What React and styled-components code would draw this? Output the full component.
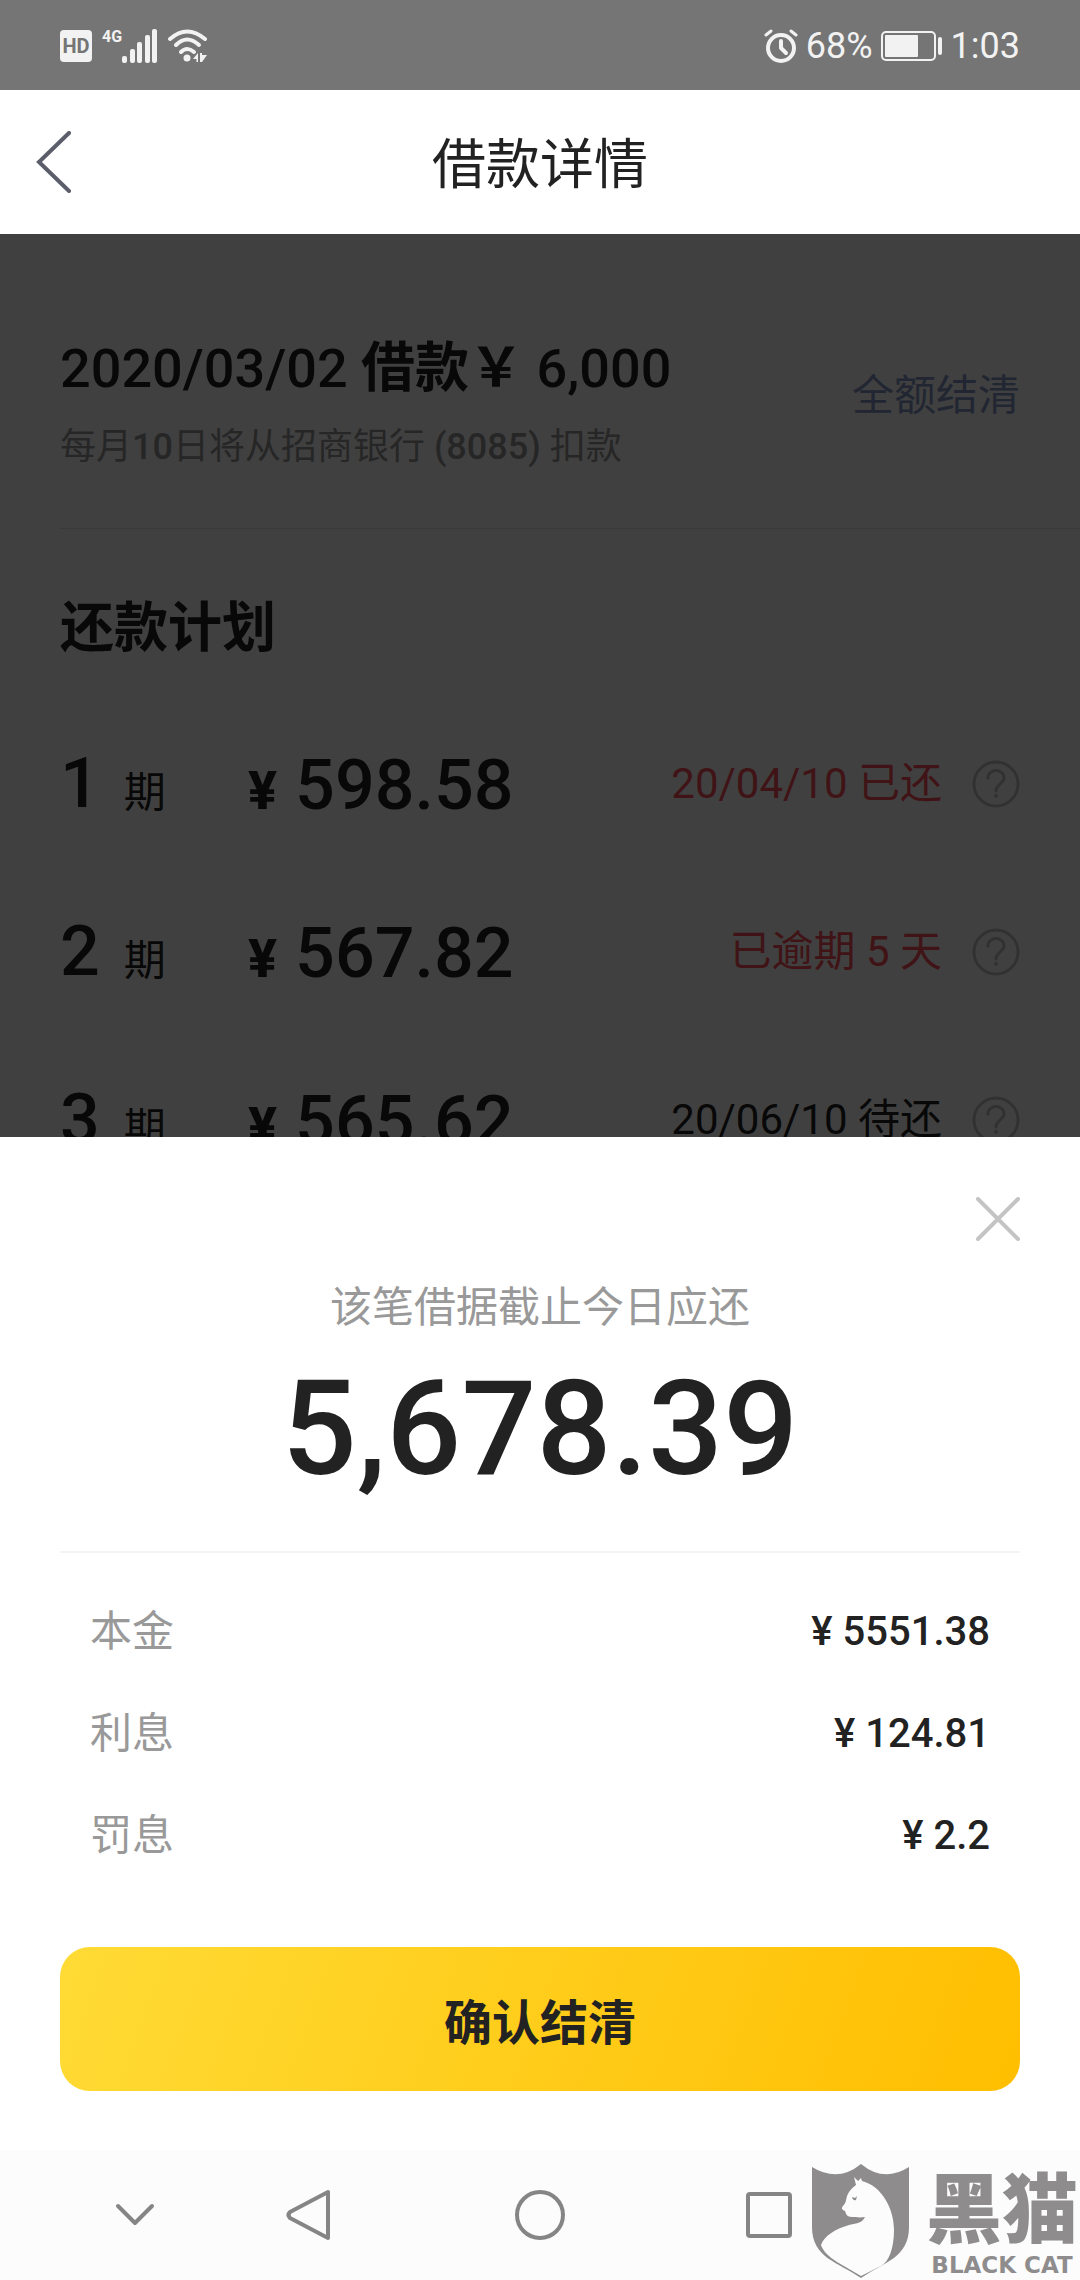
import React, { Fragment } from 'react';

//styles
import styled, { createGlobalStyle } from 'styled-components';

const COLORS = {
  TEXT: '#222222',
  MUTED: '#999999',
  LINK: '#8498c8',
  DANGER: '#ff5058',
  BORDER: '#f4f4f4',
  STATUS_BAR: '#757575',
  STATUS_ICON: '#f2f2f2',
  HELP_ICON: '#c4c4c4',
  NAV_ICON: '#858585',
  LOGO: '#8e8c8d'
};

const FONT_SIZE = {
  SMALL: '36px',
  BODY: '42px',
  BUTTON: '48px',
  TITLE: '54px',
  PLAN: '70px',
  TOTAL: '132px'
};

const GUTTER = '60px';

const GlobalStyle = createGlobalStyle`
  * {
    box-sizing: border-box;
  }
  body {
    margin: 0;
    background: #ffffff;
    color: ${COLORS.TEXT};
    font-family: Roboto, "Noto Sans CJK SC", sans-serif;
    font-size: ${FONT_SIZE.BODY};
  }
  h1, h2, p, ol, dl, dd {
    margin: 0;
    padding: 0;
  }
  button {
    border: 0;
    padding: 0;
    background: none;
    color: inherit;
    font: inherit;
  }
  svg {
    display: block;
  }
`;

const Screen = styled.div`
  position: relative;
  display: flex;
  flex-direction: column;
  height: 100vh;
  overflow: hidden;
`;

const StatusBar = styled.div`
  display: flex;
  flex: none;
  align-items: center;
  justify-content: space-between;
  height: 90px;
  padding: 2px ${GUTTER} 0;
  background: ${COLORS.STATUS_BAR};
  color: ${COLORS.STATUS_ICON};
  font-size: ${FONT_SIZE.SMALL};
`;

const StatusGroup = styled.div`
  display: flex;
  align-items: center;
  gap: ${(props) => props.$gap};
`;

const HdBadge = styled.span`
  width: 32px;
  height: 32px;
  border-radius: 4px;
  background: ${COLORS.STATUS_ICON};
  color: ${COLORS.STATUS_BAR};
  font-size: 20px;
  font-weight: 700;
  line-height: 32px;
  text-align: center;
`;

const Network = styled.div`
  display: flex;
  align-items: flex-start;
  font-size: 16px;
  font-weight: 700;
  line-height: 16px;
`;

const Header = styled.header`
  display: grid;
  flex: none;
  grid-template-columns: 1fr auto 1fr;
  align-items: center;
  height: 144px;
  padding: 0 34px;
  background: #ffffff;
`;

const BackButton = styled.button`
  justify-self: start;
`;

const HeaderTitle = styled.h1`
  padding-top: 8px;
  font-size: ${FONT_SIZE.TITLE};
  font-weight: 400;
  line-height: 72px;
`;

const Content = styled.main`
  position: relative;
  flex: 1 1 0;
  min-height: 0;
  overflow: hidden;
`;

const Mask = styled.div`
  position: absolute;
  inset: 0;
  background: rgba(0, 0, 0, 0.75);
`;

const Summary = styled.section`
  display: flex;
  align-items: center;
  justify-content: space-between;
  margin-left: ${GUTTER};
  padding: 93px ${GUTTER} 63px 0;
  border-bottom: 1px solid #e6e6e6;
`;

const SummaryTitle = styled.h2`
  font-size: ${FONT_SIZE.TITLE};
  font-weight: 500;
  line-height: 84px;
`;

const Strong = styled.span`
  font-weight: 700;
`;

const SummaryNote = styled.p`
  margin-top: 18px;
  color: ${COLORS.MUTED};
  font-size: ${FONT_SIZE.SMALL};
  line-height: 36px;
`;

const Digits = styled.span`
  font-weight: 500;
`;

const SettleLink = styled.a`
  color: ${COLORS.LINK};
  line-height: 60px;
  text-decoration: none;
`;

const PlanTitle = styled.h2`
  padding: 64px ${GUTTER} 35px;
  font-size: ${FONT_SIZE.TITLE};
  font-weight: 700;
  line-height: 72px;
`;

const PlanList = styled.ol`
  list-style: none;
`;

const PlanRow = styled.li`
  display: grid;
  grid-template-columns: 188px 1fr auto 48px;
  align-items: center;
  height: 168px;
  padding: 0 ${GUTTER};
`;

const Term = styled.div`
  display: flex;
  align-items: baseline;
  gap: 24px;
  padding-top: 8px;
  line-height: 84px;
`;

const TermNumber = styled.span`
  font-size: ${FONT_SIZE.PLAN};
  font-weight: 500;
`;

const PlanAmount = styled.div`
  display: flex;
  align-items: baseline;
  gap: 18px;
  padding-top: 8px;
  font-size: ${FONT_SIZE.PLAN};
  font-weight: 500;
  line-height: 84px;
`;

const PlanCurrency = styled.span`
  font-size: ${FONT_SIZE.TITLE};
  font-weight: 800;
`;

const PlanStatus = styled.div`
  margin-right: 30px;
  color: ${(props) => (props.$danger ? COLORS.DANGER : COLORS.TEXT)};
  line-height: 60px;
`;

const Sheet = styled.section`
  display: flex;
  flex: none;
  flex-direction: column;
  padding: 60px ${GUTTER} 59px;
  background: #ffffff;
`;

const CloseButton = styled.button`
  align-self: flex-end;
`;

const SheetLabel = styled.p`
  margin-top: 37px;
  color: ${COLORS.MUTED};
  line-height: 60px;
  text-align: center;
`;

const SheetTotal = styled.p`
  margin-top: 19px;
  padding-bottom: 50px;
  border-bottom: 2px solid ${COLORS.BORDER};
  font-size: ${FONT_SIZE.TOTAL};
  font-weight: 500;
  line-height: 144px;
  text-align: center;
`;

const Breakdown = styled.dl`
  padding: 28px 30px 60px;
`;

const BreakdownRow = styled.div`
  display: flex;
  justify-content: space-between;
  line-height: 102px;
`;

const BreakdownLabel = styled.dt`
  color: ${COLORS.MUTED};
`;

const BreakdownValue = styled.dd`
  font-size: 40px;
  font-weight: 500;
`;

const ConfirmButton = styled.button`
  height: 144px;
  border-radius: 30px;
  background: linear-gradient(110deg, #ffdb35, #ffbe00);
  font-size: ${FONT_SIZE.BUTTON};
  font-weight: 700;
`;

const NavBar = styled.nav`
  display: grid;
  flex: none;
  grid-template-columns: 169fr 180fr 282fr 176fr;
  align-items: center;
  justify-items: center;
  height: 130px;
  padding: 0 223px 0 50px;
  background: #fcfcfc;
`;

const Watermark = styled.div`
  position: absolute;
  right: 2px;
  bottom: 0;
  display: flex;
  align-items: flex-end;
  gap: 16px;
  color: ${COLORS.LOGO};
`;

const LogoText = styled.div`
  display: flex;
  flex-direction: column;
  align-items: center;
`;

const LogoName = styled.span`
  font-size: 76px;
  font-weight: 900;
  line-height: 78px;
`;

const LogoLatin = styled.span`
  font-family: "DejaVu Sans", sans-serif;
  font-size: 23px;
  font-weight: 700;
  line-height: 30px;
`;

const SignalIcon = () => (
  <svg width="36" height="34" viewBox="0 0 36 34" fill="currentColor" aria-hidden="true">
    <rect x="0" y="27" width="5" height="7" rx="2" />
    <rect x="8" y="20" width="5" height="14" rx="2" />
    <rect x="15" y="13" width="5" height="21" rx="2" />
    <rect x="23" y="6" width="5" height="28" rx="2" />
    <rect x="30" y="0" width="5" height="34" rx="2" />
  </svg>
);

const WifiIcon = () => (
  <svg width="40" height="34" viewBox="0 0 40 34" fill="none" stroke="currentColor" strokeWidth="4" strokeLinecap="round" aria-hidden="true">
    <path d="M2 10 Q19 -5 37 10" />
    <path d="M8 16 Q19 5 31 16" />
    <path d="M13 23 Q19 17 26 23" />
    <circle cx="19" cy="29" r="3.500" fill="currentColor" stroke="none" />
    <path d="M25 30 L30 24 V33 H28.500 V30 Z M32 24 H34 V26 H39 L34 33 H32 Z" fill="currentColor" stroke="none" />
  </svg>
);

const AlarmIcon = () => (
  <svg width="34" height="34" viewBox="0 0 34 34" fill="none" stroke="currentColor" strokeWidth="4" strokeLinecap="round" aria-hidden="true">
    <circle cx="17" cy="19" r="13" />
    <path d="M17 12 V19 L22 24" strokeLinejoin="round" />
    <path d="M2 6 L7 2 M27 2 L32 6" strokeWidth="3" />
  </svg>
);

const BatteryIcon = () => (
  <svg width="62" height="30" viewBox="0 0 62 30" aria-hidden="true">
    <rect x="1" y="1" width="53" height="28" rx="4" fill="none" stroke="currentColor" strokeWidth="2" />
    <rect x="4" y="4" width="33" height="22" rx="1" fill="currentColor" />
    <rect x="57" y="6" width="4" height="18" rx="2" fill="currentColor" />
  </svg>
);

const BackIcon = () => (
  <svg width="40" height="62" viewBox="0 0 40 62" fill="none" stroke="#5b5e6a" strokeWidth="4" strokeLinecap="round" aria-hidden="true">
    <path d="M35 2 L5 31 L35 60" />
  </svg>
);

const HelpIcon = () => (
  <svg width="48" height="48" viewBox="0 0 48 48" fill="none" stroke={COLORS.HELP_ICON} strokeWidth="3" aria-hidden="true">
    <circle cx="24" cy="24" r="22" />
    <path d="M16 18 C16 8 32 8 32 18 C32 24 24 24 24 31" strokeLinecap="round" />
    <circle cx="24" cy="36" r="2" fill={COLORS.HELP_ICON} stroke="none" />
  </svg>
);

const CloseIcon = () => (
  <svg width="44" height="44" viewBox="0 0 44 44" fill="none" stroke="#c4c4c4" strokeWidth="4" strokeLinecap="round" aria-hidden="true">
    <path d="M2 2 L42 42 M42 2 L2 42" />
  </svg>
);

const NavIcon = ({ children }) => (
  <svg width="54" height="54" viewBox="0 0 54 54" fill="none" stroke={COLORS.NAV_ICON} strokeWidth="4" strokeLinecap="round" strokeLinejoin="round" aria-hidden="true">
    {children}
  </svg>
);

const ShieldCat = () => (
  <svg width="98" height="116" viewBox="0 0 98 116" aria-hidden="true">
    <path
      d="M0 3 Q26 19 49 0 Q72 19 97 3 V63 C97 94 72 98 49 114 C26 98 0 94 0 63 Z"
      fill="currentColor"
    />
    <path
      d="M44 21 L42 13 L46 17 L49 14 L50 17 C70 22 82 45 82 66 C82 84 77 98 69 102 L49 112 L25 98 C16 92 11 87 9 81 C12 72 23 65 37 61 C46 59 50 59 53 53 C47 54 44 53 40 53 C35 53 34 50 33 47 C30 46 29 44 31 42 C34 39 34 36 35 32 C37 27 40 24 44 21 Z"
      fill="#fcfcfc"
    />
    <path d="M40 33 Q41 37 44 36 L45 32 L43 34 Z" fill="currentColor" />
  </svg>
);

const plans = [
  { term: 1, amount: '598.58', status: '20/04/10 已还', danger: true },
  { term: 2, amount: '567.82', status: '已逾期 5 天', danger: true },
  { term: 3, amount: '565.62', status: '20/06/10 待还', danger: false }
];

const breakdown = [
  { label: '本金', value: '5551.38' },
  { label: '利息', value: '124.81' },
  { label: '罚息', value: '2.2' }
];

const App = () => {
  return (
    <Fragment>
      <GlobalStyle />
      <Screen>
        <StatusBar>
          <StatusGroup $gap="10px">
            <HdBadge>HD</HdBadge>
            <Network>
              4G
              <SignalIcon />
            </Network>
            <WifiIcon />
          </StatusGroup>
          <StatusGroup $gap="8px">
            <AlarmIcon />
            <span>68%</span>
            <BatteryIcon />
            <span>1:03</span>
          </StatusGroup>
        </StatusBar>

        <Header>
          <BackButton type="button" aria-label="返回"><BackIcon /></BackButton>
          <HeaderTitle>借款详情</HeaderTitle>
        </Header>

        <Content>
          <Summary>
            <div>
              <SummaryTitle>2020/03/02 <Strong>借款￥</Strong> 6,000</SummaryTitle>
              <SummaryNote>
                每月<Digits>10</Digits>日将从招商银行 <Digits>(8085)</Digits> 扣款
              </SummaryNote>
            </div>
            <SettleLink href="#settle">全额结清</SettleLink>
          </Summary>
          <PlanTitle>还款计划</PlanTitle>
          <PlanList>
            {plans.map((plan) => (
              <PlanRow key={plan.term}>
                <Term><TermNumber>{plan.term}</TermNumber>期</Term>
                <PlanAmount><PlanCurrency>¥</PlanCurrency>{plan.amount}</PlanAmount>
                <PlanStatus $danger={plan.danger}>{plan.status}</PlanStatus>
                <button type="button" aria-label="说明"><HelpIcon /></button>
              </PlanRow>
            ))}
          </PlanList>
          <Mask />
        </Content>

        <Sheet id="settle">
          <CloseButton type="button" aria-label="关闭"><CloseIcon /></CloseButton>
          <SheetLabel>该笔借据截止今日应还</SheetLabel>
          <SheetTotal>5,678.39</SheetTotal>
          <Breakdown>
            {breakdown.map((item) => (
              <BreakdownRow key={item.label}>
                <BreakdownLabel>{item.label}</BreakdownLabel>
                <BreakdownValue>¥ {item.value}</BreakdownValue>
              </BreakdownRow>
            ))}
          </Breakdown>
          <ConfirmButton type="button">确认结清</ConfirmButton>
        </Sheet>

        <NavBar>
          <button type="button" aria-label="收起">
            <NavIcon><path d="M10 18 L27 35 L44 18" /></NavIcon>
          </button>
          <button type="button" aria-label="后退">
            <NavIcon><path d="M46 4 V50 L8 30 Q5 27 8 24 Z" /></NavIcon>
          </button>
          <button type="button" aria-label="主页">
            <NavIcon><circle cx="27" cy="27" r="23" /></NavIcon>
          </button>
          <button type="button" aria-label="最近任务">
            <NavIcon><rect x="6" y="6" width="42" height="42" rx="2" /></NavIcon>
          </button>
        </NavBar>

        <Watermark>
          <ShieldCat />
          <LogoText>
            <LogoName>黑猫</LogoName>
            <LogoLatin>BLACK CAT</LogoLatin>
          </LogoText>
        </Watermark>
      </Screen>
    </Fragment>
  );
};

export default App;
